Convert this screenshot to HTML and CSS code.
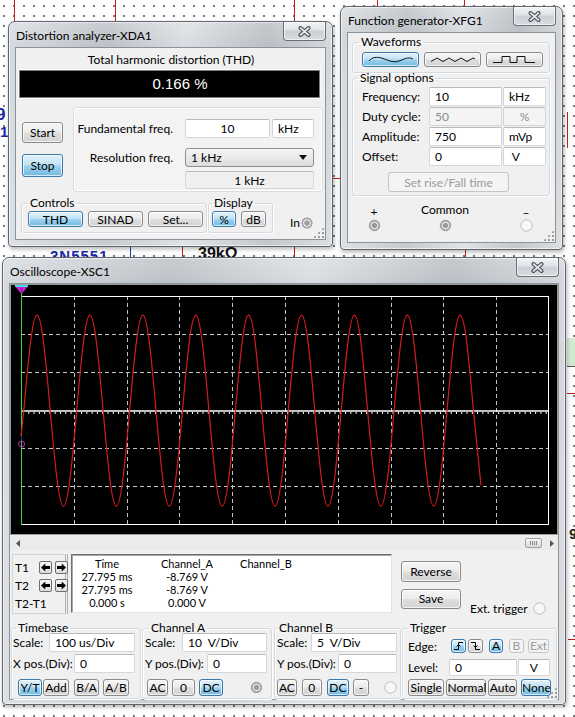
FILE: index.html
```html
<!DOCTYPE html>
<html lang="en">
<head>
<meta charset="UTF-8">
<title>Multisim - instruments</title>
<link rel="stylesheet" href="styles.css">
</head>
<body>
<div class="desk">

<!-- schematic under the instrument windows -->
<i class="wire v w1"></i>
<i class="wire v w2"></i>
<i class="wire v w3"></i>
<i class="wire v w4"></i>
<i class="wire v w5"></i>
<i class="wire v w6"></i>
<i class="wire v w7"></i>
<i class="wire v w8"></i>
<i class="wire v w9"></i>
<i class="wire h w10"></i>
<i class="wire h w11"></i>
<i class="wire h w12"></i>
<i class="wire v bl"></i>
<span class="part q1">2N5551</span>
<span class="part res">39kΩ</span>
<span class="part q2">9</span>
<span class="part q3">1</span>
<span class="part n9">9</span>
<i class="led"></i>

<!-- distortion analyzer -->
<div class="win xda">
  <div class="bar">
    <span class="title">Distortion analyzer-XDA1</span>
    <span class="close"><svg width="13" height="11" viewBox="0 0 13 11"><path d="M2.5 2L10.5 9M10.5 2L2.5 9" stroke="#464b52" stroke-width="4" stroke-linecap="round"/><path d="M2.5 2L10.5 9M10.5 2L2.5 9" stroke="#e2e5e8" stroke-width="1.8" stroke-linecap="round"/></svg></span>
  </div>
  <div class="client">
    <div class="cap">Total harmonic distortion (THD)</div>
    <div class="lcd">0.166 %</div>
    <div class="mid">
      <div class="run">
        <button class="btn start">Start</button>
        <button class="btn on stop">Stop</button>
      </div>
      <div class="freq">
        <span class="lbl">Fundamental freq.</span>
        <span class="field c">10</span>
        <span class="field">kHz</span>
        <span class="lbl">Resolution freq.</span>
        <span class="field sel">1 kHz<svg width="8" height="5" viewBox="0 0 8 5"><path d="M0 0H8L4 5Z" fill="#111"/></svg></span>
        <span class="field c ro">1 kHz</span>
      </div>
    </div>
    <div class="low">
      <fieldset class="grp ctl">
        <legend>Controls</legend>
        <div class="row">
          <button class="btn on">THD</button>
          <button class="btn">SINAD</button>
          <button class="btn">Set...</button>
        </div>
      </fieldset>
      <fieldset class="grp dsp">
        <legend>Display</legend>
        <div class="row">
          <button class="btn on pct">%</button>
          <button class="btn db">dB</button>
        </div>
      </fieldset>
      <span class="in">In</span>
      <i class="term in-t"></i>
    </div>
    <i class="grip"></i>
  </div>
</div>

<!-- function generator -->
<div class="win xfg">
  <div class="bar">
    <span class="title">Function generator-XFG1</span>
    <span class="close"><svg width="13" height="11" viewBox="0 0 13 11"><path d="M2.5 2L10.5 9M10.5 2L2.5 9" stroke="#464b52" stroke-width="4" stroke-linecap="round"/><path d="M2.5 2L10.5 9M10.5 2L2.5 9" stroke="#e2e5e8" stroke-width="1.8" stroke-linecap="round"/></svg></span>
  </div>
  <div class="client">
    <fieldset class="grp wf">
      <legend>Waveforms</legend>
      <div class="row">
        <button class="btn on wave"><svg width="46" height="9" viewBox="0 0 46 9"><path d="M1 6C4 2 9 1.5 15 3.5S25 8 31 6 40 1.5 45 4" fill="none" stroke="#111"/></svg></button>
        <button class="btn wave"><svg width="46" height="9" viewBox="0 0 46 9"><path d="M1 6.5L7 3 13 6.5 19 3 25 6.5 31 3 37 6.5 43 3 45 4" fill="none" stroke="#111"/></svg></button>
        <button class="btn wave"><svg width="46" height="9" viewBox="0 0 46 9"><path d="M1 7.5H10V1.5H18V7.5H25V1.5H33V7.5H43" fill="none" stroke="#111"/></svg></button>
      </div>
    </fieldset>
    <fieldset class="grp sig">
      <legend>Signal options</legend>
      <div class="opts">
        <span>Frequency:</span><span class="field">10</span><span class="field">kHz</span>
        <span>Duty cycle:</span><span class="field dis">50</span><span class="field dis c">%</span>
        <span>Amplitude:</span><span class="field">750</span><span class="field">mVp</span>
        <span>Offset:</span><span class="field">0</span><span class="field">&nbsp;V</span>
      </div>
      <button class="btn off rise">Set rise/Fall time</button>
    </fieldset>
    <div class="terms">
      <div class="tc plus"><span>+</span><i class="term"></i></div>
      <div class="tc com"><span>Common</span><i class="term"></i></div>
      <div class="tc minus"><span>–</span><i class="term off"></i></div>
    </div>
    <i class="grip"></i>
  </div>
</div>

<!-- oscilloscope -->
<div class="win xsc">
  <div class="bar">
    <span class="title">Oscilloscope-XSC1</span>
    <span class="close"><svg width="13" height="11" viewBox="0 0 13 11"><path d="M2.5 2L10.5 9M10.5 2L2.5 9" stroke="#464b52" stroke-width="4" stroke-linecap="round"/><path d="M2.5 2L10.5 9M10.5 2L2.5 9" stroke="#e2e5e8" stroke-width="1.8" stroke-linecap="round"/></svg></span>
  </div>
  <div class="client">
    <div class="screen">
      <svg width="546" height="248" viewBox="11 285 546 248">
        <path d="M74.5 296V525M127.5 296V525M179.5 296V525M232.5 296V525M285.5 296V525M338.5 296V525M391.5 296V525M443.5 296V525M496.5 296V525M21 334.5H549M21 372.5H549M21 448.5H549M21 486.5H549" stroke="#c4c4c4" stroke-dasharray="4 3"/>
        <rect x="21.5" y="296.5" width="527" height="228" fill="none" stroke="#fff"/>
        <path d="M21 411H549" stroke="#fff" stroke-width="1.5"/>
        <path d="M23 413H549" stroke="#fff" stroke-width="2" stroke-dasharray="1 4.28"/>
        <path d="M21.5 293V525" stroke="#3fd43f"/>
        <path d="M21,436 L23.8,410.7 c4.313,-48.92 8.438,-95.5 13.225,-95.5
          s8.912,46.58 13.225,95.5 s8.438,95.5 13.225,95.5 s8.912,-46.58 13.225,-95.5 s8.438,-95.5 13.225,-95.5
          s8.912,46.58 13.225,95.5 s8.438,95.5 13.225,95.5 s8.912,-46.58 13.225,-95.5 s8.438,-95.5 13.225,-95.5
          s8.912,46.58 13.225,95.5 s8.438,95.5 13.225,95.5 s8.912,-46.58 13.225,-95.5 s8.438,-95.5 13.225,-95.5
          s8.912,46.58 13.225,95.5 s8.438,95.5 13.225,95.5 s8.912,-46.58 13.225,-95.5 s8.438,-95.5 13.225,-95.5
          s8.912,46.58 13.225,95.5 s8.438,95.5 13.225,95.5 s8.912,-46.58 13.225,-95.5 s8.438,-95.5 13.225,-95.5
          s8.912,46.58 13.225,95.5 s8.438,95.5 13.225,95.5 s8.912,-46.58 13.225,-95.5 s8.438,-95.5 13.225,-95.5
          s8.912,46.58 13.225,95.5 s8.438,95.5 13.225,95.5 s8.912,-46.58 13.225,-95.5 s8.438,-95.5 13.225,-95.5
          s8.912,46.58 13.225,95.5 s8.438,95.5 13.225,95.5 s8.912,-46.58 13.225,-95.5 s8.438,-95.5 13.225,-95.5
          s8.912,46.58 13.225,95.5 L481,485.6" fill="none" stroke="#d41c1c" stroke-width="1.2"/>
        <path d="M15.5 287H27.5L21.5 294Z" fill="#d21fd2"/>
        <path d="M15 286H28" stroke="#3fdede" stroke-width="2"/>
        <text x="21.5" y="292" font-size="6" font-family="Liberation Sans" fill="#1b2a70" text-anchor="middle">1</text>
        <path d="M21.5 436V441" stroke="#2a2aa0"/>
        <circle cx="21.5" cy="444" r="3" fill="none" stroke="#c22cc2"/>
      </svg>
    </div>
    <div class="hscroll">
      <svg width="4" height="7" viewBox="0 0 4 7"><path d="M4 0V7L0 3.5Z" fill="#555"/></svg>
      <span class="thumb"></span>
      <svg class="ra" width="4" height="7" viewBox="0 0 4 7"><path d="M0 0V7L4 3.5Z" fill="#555"/></svg>
    </div>
    <div class="cursors">
      <div class="tbox">
        <span>T1</span>
        <button class="ab"><svg width="9" height="9" viewBox="0 0 9 9"><path d="M0 4.5L4.3 0.5V3H9V6H4.3V8.5Z" fill="#000"/></svg></button>
        <button class="ab"><svg width="9" height="9" viewBox="0 0 9 9"><path d="M9 4.5L4.7 0.5V3H0V6H4.7V8.5Z" fill="#000"/></svg></button>
        <span>T2</span>
        <button class="ab"><svg width="9" height="9" viewBox="0 0 9 9"><path d="M0 4.5L4.3 0.5V3H9V6H4.3V8.5Z" fill="#000"/></svg></button>
        <button class="ab"><svg width="9" height="9" viewBox="0 0 9 9"><path d="M9 4.5L4.7 0.5V3H0V6H4.7V8.5Z" fill="#000"/></svg></button>
        <span class="dt">T2-T1</span>
      </div>
      <div class="readout">
        <span>Time</span><span>Channel_A</span><span>Channel_B</span>
        <span>27.795 ms</span><span>-8.769 V</span><span></span>
        <span>27.795 ms</span><span>-8.769 V</span><span></span>
        <span>0.000 s</span><span>0.000 V</span><span></span>
      </div>
      <div class="rs">
        <button class="btn rev">Reverse</button>
        <button class="btn sav">Save</button>
      </div>
      <div class="ext">Ext. trigger <i class="term off"></i></div>
    </div>
    <div class="ctrls">
      <fieldset class="grp tb">
        <legend>Timebase</legend>
        <div class="r r1"><span>Scale:</span><span class="field f86">100 us/Div</span></div>
        <div class="r r2"><span>X pos.(Div):</span><span class="field f61">0</span></div>
        <div class="bts">
          <button class="btn on yt">Y/T</button>
          <button class="btn add">Add</button>
          <button class="btn ba">B/A</button>
          <button class="btn ab2">A/B</button>
        </div>
      </fieldset>
      <fieldset class="grp cha">
        <legend>Channel A</legend>
        <div class="r r1"><span>Scale:</span><span class="field f85">10&nbsp; V/Div</span></div>
        <div class="r r2"><span>Y pos.(Div):</span><span class="field f60">0</span></div>
        <div class="bts">
          <button class="btn ac">AC</button>
          <button class="btn zero">0</button>
          <button class="btn on dc">DC</button>
          <i class="term ch"></i>
        </div>
      </fieldset>
      <fieldset class="grp chb">
        <legend>Channel B</legend>
        <div class="r r1"><span>Scale:</span><span class="field f86">5&nbsp; V/Div</span></div>
        <div class="r r2"><span>Y pos.(Div):</span><span class="field f59">0</span></div>
        <div class="bts">
          <button class="btn ac">AC</button>
          <button class="btn zero">0</button>
          <button class="btn on dc">DC</button>
          <button class="btn minus">-</button>
          <i class="term off ch"></i>
        </div>
      </fieldset>
      <fieldset class="grp trg">
        <legend>Trigger</legend>
        <div class="e">
          <span class="el">Edge:</span>
          <button class="btn on ed"><svg width="11" height="10" viewBox="0 0 11 10"><path d="M1 8.5H5.5V1.5H10M3.5 5.5L5.5 3.5 7.5 5.5" fill="none" stroke="#000"/></svg></button>
          <button class="btn ed fall"><svg width="11" height="10" viewBox="0 0 11 10"><path d="M1 1.5H5.5V8.5H10M3.5 4.5L5.5 6.5 7.5 4.5" fill="none" stroke="#000"/></svg></button>
          <button class="btn on ta">A</button>
          <button class="btn off tbb">B</button>
          <button class="btn off tx">Ext</button>
        </div>
        <div class="lv">
          <span class="ll">Level:</span>
          <span class="field f68">0</span>
          <span class="field f32">&nbsp; V</span>
        </div>
        <div class="bts">
          <button class="btn sg">Single</button>
          <button class="btn nm">Normal</button>
          <button class="btn au">Auto</button>
          <button class="btn on no">None</button>
        </div>
      </fieldset>
    </div>
    <i class="grip"></i>
  </div>
</div>

</div>
</body>
</html>
```

FILE: styles.css
```css
body{margin:0;font:12px Lato,"Liberation Sans",sans-serif;color:#000;}
button{font:inherit;color:inherit;margin:0;padding:0;}

/* schematic sheet */
.desk{position:relative;width:575px;height:717px;overflow:hidden;background:#fff radial-gradient(circle,#777 0.7px,transparent 1.1px) -1px 1px/10px 10px;}
.wire{position:absolute;background:#c81c1c;}
.wire.v{width:1px;}
.wire.h{height:1px;}
.w1{left:14px;top:0;height:22px;}
.w2{left:115px;top:0;height:21px;}
.w3{left:294px;top:0;height:21px;}
.w4{left:377px;top:0;height:7px;}
.w5{left:464px;top:0;height:7px;}
.w6{left:567px;top:112px;height:36px;}
.w7{left:182px;top:246px;height:12px;}
.w8{left:294px;top:246px;height:12px;}
.w9{left:465px;top:249px;height:9px;}
.w10{left:333px;top:178px;width:8px;}
.w11{left:567px;top:393px;width:8px;}
.w12{left:568px;top:639px;width:7px;}
.bl{left:130px;top:246px;height:12px;background:#2233b0;}
.part{position:absolute;font:bold 15px "Liberation Sans",Arial,sans-serif;line-height:16px;color:#1c2aa8;}
.q1{left:50px;top:248px;letter-spacing:1px;}
.res{left:198px;top:246px;color:#111;font-size:16px;}
.q2{left:-4px;top:107px;font-size:17px;}
.q3{left:0;top:124px;}
.n9{left:569px;top:526px;color:#222;}
.led{position:absolute;left:567px;top:338px;width:8px;height:28px;background:#d2ead2;border-bottom:1px solid #555;}

/* window frames */
.win{position:absolute;box-sizing:border-box;display:flex;flex-direction:column;padding:0 6px 6px;border:1px solid #5e656d;border-radius:7px 7px 4px 4px;background:linear-gradient(90deg,rgba(255,255,255,.25),rgba(0,0,0,.06) 30%,rgba(255,255,255,.3) 55%,rgba(0,0,0,.07) 80%,rgba(255,255,255,.2)),linear-gradient(#d5d9de,#c8cdd3 26px,#d3d7db);box-shadow:inset 0 0 0 1px rgba(255,255,255,.55),1px 2px 4px rgba(0,0,0,.3);}
.xda{left:8px;top:21px;width:325px;height:226px;}
.xfg{left:340px;top:6px;width:223px;height:244px;}
.xsc{left:2px;top:257px;width:564px;height:448px;}
.bar{flex:none;height:25px;display:flex;justify-content:space-between;align-items:flex-start;}
.title{margin:6px 0 0 1px;line-height:15px;}
.close{width:43px;height:19px;box-sizing:border-box;display:flex;align-items:center;justify-content:center;border:1px solid #6a7078;border-top:0;border-radius:0 0 4px 4px;background:linear-gradient(#f2f3f5,#dfe2e6 45%,#cbd0d6 50%,#d9dce0);box-shadow:inset 0 0 0 1px rgba(255,255,255,.6);}
.client{flex:1;position:relative;box-sizing:border-box;background:#f0f0f0;border:1px solid #8b9299;}
.grip{position:absolute;right:1px;bottom:1px;width:11px;height:11px;background:radial-gradient(circle,#9a9a9a 0.9px,transparent 1.3px) 0 0/4px 4px;clip-path:polygon(100% 0,100% 100%,0 100%);}

/* common controls */
.btn{box-sizing:border-box;height:17px;border:1px solid #8a8a8a;border-radius:3px;background:linear-gradient(#f5f5f5,#ececec 48%,#dedede 52%,#d3d3d3);box-shadow:inset 0 0 0 1px rgba(255,255,255,.7);line-height:14px;text-align:center;white-space:nowrap;}
.btn.on{border-color:#3c79a9;background:linear-gradient(#e3f2fb,#c2e3f5 45%,#9ad1ef 55%,#72b9e1);}
.btn.off{color:#9a9a9a;border-color:#c2c4c6;background:#f4f4f4;box-shadow:none;}
.field{box-sizing:border-box;height:19px;padding:0 5px;background:#fff;border:1px solid #d3d6da;border-top-color:#b6b9bd;border-radius:2px;line-height:17px;white-space:nowrap;overflow:hidden;}
.field.c{text-align:center;}
.field.dis{background:#f4f4f4;color:#8c8c8c;}
.grp{box-sizing:border-box;margin:0;padding:0;min-width:0;border:1px solid #d2dae0;border-radius:3px;box-shadow:inset 1px 1px 0 #fff,1px 1px 0 #fff;}
.grp legend{padding:0 2px;line-height:12px;}
.row{display:flex;gap:5px;}
.term{display:block;flex:none;width:13px;height:13px;border-radius:50%;background:radial-gradient(circle,#9b9b9b 0 2.4px,#e2e2e2 2.9px 3.7px,#a3a3a3 4.2px 5.3px,#e6e6e6 5.8px);}
.term.off{background:radial-gradient(circle,#f8f8f8 0 4.8px,#cdcdcd 5.3px 6.1px,transparent 6.5px);}

/* distortion analyzer */
.xda .client{padding:5px 2px 0 3px;}
.cap{text-align:center;line-height:14px;}
.lcd{box-sizing:border-box;height:28px;margin:3px 3px 0 0;padding-left:21px;background:#000;border:1px solid #7d7d7d;box-shadow:0 0 0 1px #fbfbfb;color:#fff;font:15px "Liberation Sans",Arial,sans-serif;line-height:26px;text-align:center;}
.mid{display:flex;margin-top:9px;}
.run{box-sizing:border-box;width:54px;display:flex;flex-direction:column;align-items:flex-start;gap:11px;padding:15px 0 0 3px;}
.run .btn{width:41px;height:21px;line-height:18px;}
.run .stop{height:23px;}
.freq{box-sizing:border-box;width:250px;height:85px;display:grid;grid-template-columns:109px 85px 42px;grid-template-rows:19px 29px 22px;column-gap:2px;align-items:end;padding-top:11px;border:1px solid #dcdcdc;border-radius:3px;background:#f3f3f3;box-shadow:inset 0 0 0 1px #fff;}
.lbl{text-align:right;padding-right:10px;line-height:19px;}
.sel{grid-column:2/4;display:flex;justify-content:space-between;align-items:center;padding:0 6px 0 5px;border-color:#8f8f8f;border-radius:3px;background:linear-gradient(#f6f6f6,#e9e9e9 50%,#dcdcdc);}
.ro{grid-column:2/4;height:18px;background:#f0f0f0;}
.low{display:flex;align-items:flex-end;margin-top:5px;}
.ctl{width:186px;margin-left:2px;padding:0 3px 5px 6px;}
.dsp{width:65px;margin-left:1px;padding:0 6px 5px 3px;}
.low .row{margin-top:2px;}
.ctl .btn{width:55px;height:16px;line-height:13px;}
.dsp .btn{width:24px;height:16px;line-height:13px;}
.dsp .db{width:25px;}
.in{margin:0 1px 3px 17px;line-height:14px;}
.in-t{width:12px;height:12px;margin-bottom:4px;}

/* function generator */
.xfg .client{padding:3px 0 0 4px;}
.wf{width:198px;padding:0 0 5px 6px;}
.wf .row{margin:4px 0 0 3px;}
.wave{width:57px;height:15px;display:flex;align-items:center;justify-content:center;}
.sig{width:198px;margin-top:-1px;padding:0 5px 3px 9px;}
.sig legend{margin-left:-4px;}
.opts{display:grid;grid-template-columns:66px 73px 43px;grid-auto-rows:19px;gap:1px;margin-top:3px;}
.opts span:not(.field){line-height:19px;}
.rise{display:block;width:121px;height:20px;margin:6px 0 0 26px;line-height:17px;}
.terms{display:flex;margin-top:7px;}
.tc{width:40px;display:flex;flex-direction:column;align-items:center;}
.tc span{box-sizing:border-box;height:16px;line-height:14px;}
.plus{margin-left:2px;}
.plus span{padding-top:2px;}
.com{margin-left:31px;}
.minus{margin-left:41px;}
.minus span{padding-top:3px;}

/* oscilloscope */
.screen{height:251px;box-sizing:border-box;border:1px solid #9c9c9c;background:#000;}
.screen svg{display:block;}
.hscroll{height:14px;margin-top:1px;display:flex;align-items:center;padding-left:6px;background:#ebebeb;}
.thumb{width:17px;height:10px;margin-left:auto;box-sizing:border-box;border:1px solid #a2a2a2;border-radius:2px;background:repeating-linear-gradient(90deg,#8a8a8a 0 1px,transparent 1px 2px) center/7px 4px no-repeat,linear-gradient(#f6f6f6,#dadada);}
.ra{margin:0 4px 0 8px;}
.cursors{display:flex;height:62px;margin-top:2px;}
.tbox{box-sizing:border-box;width:56px;height:60px;margin:2px 0 0 2px;padding:6px 0 0 2px;display:grid;grid-template-columns:21px 13px 13px;grid-template-rows:13px 14px 14px;column-gap:3px;row-gap:4px;align-items:center;border:1px solid #d4d4d4;border-right:3px double #b0b0b0;}
.tbox .dt{grid-column:1/4;}
.ab{box-sizing:border-box;width:13px;height:13px;display:flex;align-items:center;justify-content:center;border:1px solid #6f6f6f;border-radius:2px;background:linear-gradient(#f6f6f6,#dcdcdc);}
.readout{box-sizing:border-box;width:321px;height:59px;margin:2px 0 0 3px;padding-top:2px;display:grid;grid-template-columns:70px 90px 68px;grid-auto-rows:13px;align-content:start;text-align:center;font-size:11px;line-height:13px;background:#fff;border:1px solid #e2e2e2;border-top-color:#6e6e6e;border-left-color:#6e6e6e;box-shadow:inset 1px 1px 0 #a9a9a9;}
.rs{display:flex;flex-direction:column;gap:7px;width:60px;margin-left:9px;padding-top:9px;}
.rs .btn{height:21px;line-height:18px;}
.rs .sav{height:20px;}
.ext{align-self:flex-end;display:flex;align-items:center;gap:5px;margin:0 0 -2px 9px;}
.ctrls{display:flex;margin-top:8px;}
.r{display:flex;align-items:center;justify-content:space-between;height:19px;}
.r1{margin-top:-1px;}
.r2{margin-top:2px;}
.bts{display:flex;align-items:center;margin-top:6px;}
.tb{width:130px;margin-left:1px;padding:0 5px 2px 1px;}
.tb legend{margin-left:3px;}
.cha{width:130px;margin-left:1px;padding:0 4px 2px 2px;}
.cha legend{margin-left:4px;}
.chb{width:127px;margin-left:2px;padding:0 3px 2px 2px;}
.trg{width:155px;margin-left:1px;padding:0 5px 2px 5px;}
.f86{width:86px;}
.f85{width:85px;}
.f61{width:61px;}
.f60{width:60px;}
.f59{width:59px;}
.f68{width:68px;height:17px;line-height:15px;}
.f32{width:32px;height:17px;line-height:15px;margin-left:1px;}
.yt{width:24px;margin-left:5px;}
.add{width:26px;margin-left:1px;}
.ba{width:25px;margin-left:5px;}
.ab2{width:26px;margin-left:4px;}
.ac{width:21px;margin-left:2px;}
.zero{width:23px;margin-left:4px;}
.dc{width:24px;margin-left:4px;}
.cha .ch{margin-left:27px;}
.chb .ac{width:20px;margin-left:0;}
.chb .zero{width:20px;margin-left:5px;}
.chb .dc{width:23px;margin-left:5px;}
.minus.btn{width:16px;margin-left:4px;}
.chb .ch{margin-left:15px;}
.e{display:flex;align-items:center;height:14px;margin-top:5px;}
.el{width:43px;}
.ed{width:15px;height:14px;display:flex;align-items:center;justify-content:center;}
.fall{margin-left:2px;}
.ta{width:14px;height:14px;margin-left:6px;line-height:12px;}
.tbb{width:15px;height:14px;margin-left:6px;line-height:12px;}
.tx{width:21px;height:14px;margin-left:4px;line-height:12px;}
.lv{display:flex;align-items:center;height:17px;margin-top:6px;}
.ll{width:41px;}
.trg .bts{margin-top:3px;}
.sg{width:37px;}
.nm{width:40px;margin-left:2px;}
.au{width:29px;margin-left:2px;}
.no{width:30px;margin-left:4px;}
```
